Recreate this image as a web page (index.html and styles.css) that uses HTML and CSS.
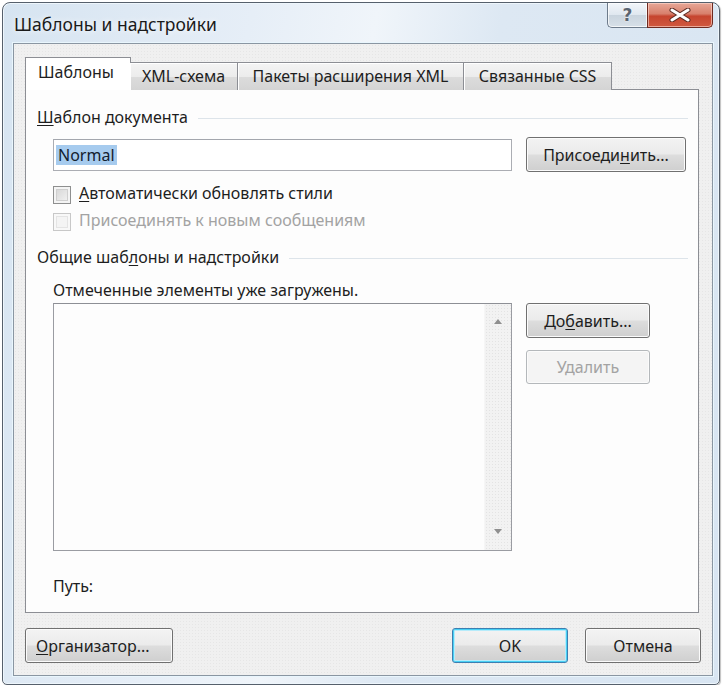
FILE: index.html
```html
<!DOCTYPE html>
<html lang="ru">
<head>
<meta charset="utf-8">
<title>Шаблоны и надстройки</title>
<link rel="stylesheet" href="styles.css">
</head>
<body>
<div class="window">
  <div class="titlebar">
    <span class="title">Шаблоны и надстройки</span>
    <div class="caption-btns">
      <div class="cap help">?</div>
      <div class="cap close">
        <svg width="22" height="14" viewBox="0 0 22 14"><path d="M3 2 L19 12 M19 2 L3 12" stroke="#5a2a22" stroke-width="5" stroke-linecap="round"/><path d="M3 2 L19 12 M19 2 L3 12" stroke="#ffffff" stroke-width="3" stroke-linecap="round"/></svg>
      </div>
    </div>
  </div>
  <div class="client">
    <div class="tabs">
      <div class="tab active t1">Шаблоны</div>
      <div class="tab t2">XML-схема</div>
      <div class="tab t3">Пакеты расширения XML</div>
      <div class="tab t4">Связанные CSS</div>
    </div>
    <div class="panel">
      <div class="group-head first"><span><u>Ш</u>аблон документа</span><i class="rule"></i></div>
      <div class="field-row">
        <div class="input"><span class="sel">Normal</span></div>
        <button class="btn attach">Присоеди<u>н</u>ить...</button>
      </div>
      <div class="check-row first-check"><span class="box"></span><span><u>А</u>втоматически обновлять стили</span></div>
      <div class="check-row disabled"><span class="box"></span><span>Присоединять к новым сообщениям</span></div>
      <div class="group-head second"><span>Общие шаб<u>л</u>оны и надстройки</span><i class="rule"></i></div>
      <div class="caption">Отмеченные элементы уже загружены.</div>
      <div class="list-row">
        <div class="listbox">
          <div class="list-area"></div>
          <div class="scrollbar">
            <svg width="10" height="6" viewBox="0 0 10 6"><path d="M1 6 L5 1 L9 6 Z" fill="#8f8f8f"/></svg>
            <svg width="10" height="6" viewBox="0 0 10 6"><path d="M1 0 L5 5 L9 0 Z" fill="#8f8f8f"/></svg>
          </div>
        </div>
        <div class="side-btns">
          <button class="btn side">До<u>б</u>авить...</button>
          <button class="btn side disabled">Удалить</button>
        </div>
      </div>
      <div class="path">Путь:</div>
    </div>
    <div class="footer">
      <button class="btn org"><u>О</u>рганизатор...</button>
      <div class="spacer"></div>
      <button class="btn ok">OK</button>
      <button class="btn cancel">Отмена</button>
    </div>
  </div>
</div>
</body>
</html>
```
FILE: styles.css
```css
* { box-sizing: border-box; }
html, body { margin: 0; padding: 0; background: #ffffff; }
body {
  font-family: "Noto Sans", "Open Sans", "DejaVu Sans", sans-serif;
  font-size: 16px;
  color: #1e1e1e;
}
u { text-decoration: underline; text-underline-offset: 2px; text-decoration-thickness: 1px; }

.window {
  margin: 2px 0 0 2px;
  width: 718px;
  height: 683px;
  border: 1px solid #56606c;
  border-radius: 8px 8px 5px 5px;
  background: linear-gradient(100deg, #d6e4f1 0%, #e6eef7 30%, #f0f5fa 45%, #dde8f3 60%, #d8e5f2 100%);
  padding: 0 6px 8px 10px;
  box-shadow: inset 0 0 0 1px #eef6fc, 1px 1px 1px rgba(0,0,0,0.25);
  display: flex;
  flex-direction: column;
}
.titlebar {
  height: 40px;
  display: flex;
  align-items: flex-start;
  justify-content: space-between;
  flex: none;
}
.title {
  margin-top: 9px;
  margin-left: 1px;
  font-size: 17.5px;
  color: #1a1a1a;
  text-shadow: 0 0 6px #ffffff;
}
.caption-btns { display: flex; margin-right: 0px; }
.cap {
  height: 25px;
  display: flex;
  align-items: center;
  justify-content: center;
  border: 1px solid #6d7b8b;
  border-top: none;
}
.help {
  width: 40px;
  border-radius: 0 0 0 5px;
  background: linear-gradient(#f2f6fa 0%, #dfe7ef 50%, #c9d4de 51%, #d7e0e8 100%);
  color: #5a6470;
  font-size: 17px;
  font-weight: bold;
  font-family: "DejaVu Sans", sans-serif;
  text-shadow: 0 0 2px #ffffff;
  border-right: none;
  box-shadow: inset 0 0 0 1px rgba(255,255,255,0.7);
}
.close {
  width: 66px;
  border-radius: 0 0 5px 0;
  border-color: #6e2a20;
  background: linear-gradient(#e7a797 0%, #d8806c 45%, #c6452f 55%, #d0593f 100%);
  box-shadow: inset 0 0 0 1px rgba(255,220,210,0.6);
}
.client {
  flex: 1;
  border: 1px solid #8a96a2;
  background-color: #f0f0f0;
  background-image: radial-gradient(#e6e6e6 0.6px, transparent 0.9px);
  background-size: 3px 3px;
  padding: 14px 0 0 11px;
  display: flex;
  flex-direction: column;
  box-shadow: 0 0 0 1px #e9f6fd;
}
.tabs {
  display: flex;
  height: 32px;
  align-items: flex-end;
  margin-bottom: -1px;
  position: relative;
  z-index: 1;
}
.tab {
  height: 28px;
  border: 1px solid #8c8e94;
  border-bottom: none;
  margin-left: -1px;
  display: flex;
  align-items: center;
  justify-content: center;
  background: linear-gradient(#f4f4f4 0%, #ececec 50%, #dcdcdc 51%, #d4d4d4 100%);
  box-shadow: inset 1px 1px 0 #ffffff;
  padding-bottom: 2px;
}
.tab.t1 { width: 106px; margin-left: 0; }
.tab.t2 { width: 108px; border-left: none; }
.tab.t3 { width: 227px; }
.tab.t4 { width: 149px; }
.tab.active {
  height: 33px;
  background: #ffffff;
  box-shadow: none;
  padding-bottom: 5px;
  justify-content: flex-start;
  padding-left: 12px;
}
.panel {
  width: 674px;
  height: 524px;
  background: #fdfdfd;
  border: 1px solid #8c8e94;
  padding: 17px 10px 0 11px;
  display: flex;
  flex-direction: column;
}
.group-head {
  height: 20px;
  display: flex;
  align-items: center;
  gap: 10px;
}
.group-head .rule {
  flex: 1;
  height: 1px;
  background: #dde4ea;
  margin-top: 2px;
}
.group-head.second { margin-top: 16px; }
.field-row {
  margin-top: 10px;
  margin-left: 16px;
  display: flex;
  align-items: center;
  gap: 14px;
  height: 35px;
}
.input {
  width: 459px;
  height: 32px;
  border: 1px solid #abadb3;
  border-top-color: #a3a6ad;
  background: #ffffff;
  display: flex;
  align-items: center;
  padding-left: 2px;
}
.sel {
  background: #a6cbee;
  padding: 0 2px;
  line-height: 20px;
  color: #13202e;
}
.btn {
  font-family: inherit;
  font-size: 16px;
  color: #1e1e1e;
  border: 1px solid #707070;
  border-radius: 3px;
  background: linear-gradient(#f3f3f3 0%, #ebebeb 48%, #dddddd 52%, #cfcfcf 100%);
  box-shadow: inset 0 0 0 1px #fbfbfb;
  padding: 0;
  height: 35px;
  display: flex;
  align-items: center;
  justify-content: center;
}
.btn.attach { width: 160px; }
.check-row {
  margin-left: 16px;
  height: 22px;
  display: flex;
  align-items: center;
  gap: 8px;
}
.first-check { margin-top: 10px; }
.check-row.disabled { margin-top: 5px; color: #a3a3a3; }
.box {
  width: 18px;
  height: 18px;
  border: 1px solid #8e8f8f;
  background: linear-gradient(135deg, #d2d2d2, #f6f6f6);
  box-shadow: inset 0 0 0 2px #f4f4f4, inset 0 0 0 3px #cfcfcf;
  margin-top: 3px;
}
.check-row.disabled .box {
  border-color: #c8c8c8;
  background: #f4f4f4;
  box-shadow: inset 0 0 0 2px #f8f8f8, inset 0 0 0 3px #e4e4e4;
}
.caption {
  margin-top: 13px;
  margin-left: 16px;
  height: 20px;
  display: flex;
  align-items: center;
}
.list-row {
  margin-top: 3px;
  margin-left: 16px;
  display: flex;
  gap: 14px;
  align-items: flex-start;
}
.listbox {
  width: 459px;
  height: 248px;
  border: 1px solid #9a9ca2;
  border-top-color: #8d8f95;
  background: #fdfdfd;
  display: flex;
}
.list-area { flex: 1; }
.scrollbar {
  width: 27px;
  background-color: #f2f2f2;
  background-image: radial-gradient(#e3e3e3 0.6px, transparent 0.9px);
  background-size: 3px 3px;
  display: flex;
  flex-direction: column;
  justify-content: space-between;
  align-items: center;
  padding: 14px 0 15px;
  border-left: 1px solid #f6f6f6;
}
.side-btns {
  display: flex;
  flex-direction: column;
  gap: 12px;
}
.btn.side { width: 124px; }
.btn.disabled {
  color: #a3a3a3;
  border-color: #b4b8bb;
  background: #f4f4f4;
  box-shadow: inset 0 0 0 1px #fbfbfb;
  height: 34px;
}
.path {
  margin-top: 25px;
  margin-left: 16px;
  height: 20px;
  display: flex;
  align-items: center;
}
.footer {
  margin-top: 15px;
  display: flex;
  align-items: center;
  height: 35px;
  padding-right: 11px;
  gap: 17px;
}
.spacer { flex: 1; }
.btn.org { width: 148px; justify-content: flex-start; padding-left: 10px; }
.btn.ok {
  width: 116px;
  border-color: #3c7fb1;
  box-shadow: inset 0 0 0 1px #48d0f4, inset 0 0 0 2px #b6ebfa;
}
.btn.cancel { width: 116px; }
```
